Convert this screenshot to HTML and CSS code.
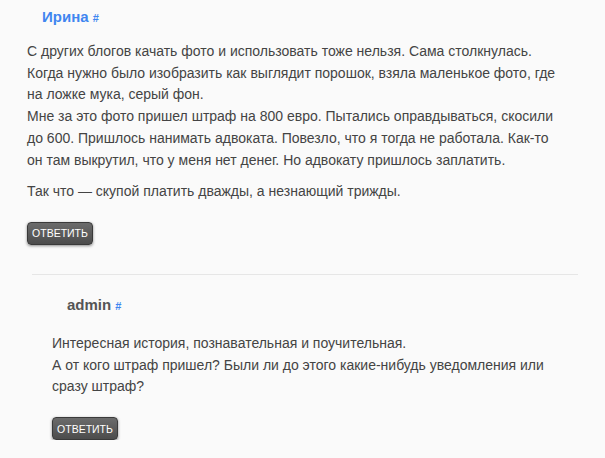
FILE: index.html
```html
<!DOCTYPE html>
<html lang="ru">
<head>
  <meta charset="UTF-8" />
  <title>Комментарии</title>
  <link rel="stylesheet" href="styles.css">
</head>
<body>
  <div class="comments">
    <div class="comment">
      <div class="author author-guest">Ирина <a href="#" class="anchor">#</a></div>
      <div class="text">
        <p>С других блогов качать фото и использовать тоже нельзя. Сама столкнулась. Когда нужно было изобразить как выглядит порошок, взяла маленькое фото, где на ложке мука, серый фон.<br>Мне за это фото пришел штраф на 800 евро. Пытались оправдываться, скосили до 600. Пришлось нанимать адвоката. Повезло, что я тогда не работала. Как-то он там выкрутил, что у меня нет денег. Но адвокату пришлось заплатить.</p>
        <p>Так что — скупой платить дважды, а незнающий трижды.</p>
      </div>
      <button class="reply-btn">ОТВЕТИТЬ</button>

      <div class="comment comment-child">
        <div class="author">admin <a href="#" class="anchor">#</a></div>
        <div class="text">
          <p>Интересная история, познавательная и поучительная.<br>А от кого штраф пришел? Были ли до этого какие-нибудь уведомления или сразу штраф?</p>
        </div>
        <button class="reply-btn">ОТВЕТИТЬ</button>
      </div>
    </div>
  </div>
</body>
</html>
```

FILE: styles.css
```css
* {
  box-sizing: border-box;
}

body {
  margin: 0;
  background: #fafafa;
  font-family: "Liberation Sans", Arial, sans-serif;
  color: #444;
}

.comments {
  width: 578px;
}

.comment {
  padding: 7px 0 0 27px;
}

.author {
  margin-left: 15px;
  font-size: 15px;
  line-height: 20px;
  font-weight: bold;
  color: #555;
}

.author-guest {
  color: #3f86f0;
}

.anchor {
  font-size: 11px;
  color: #3f86f0;
  text-decoration: none;
}

.text {
  max-width: 538px;
  margin-top: 13px;
  font-size: 14px;
  line-height: 21.7px;
}

.text p {
  margin: 0 0 10px;
}

.reply-btn {
  display: block;
  margin-top: 19px;
  width: 66px;
  height: 23px;
  padding: 0;
  font-family: "Liberation Sans", Arial, sans-serif;
  font-size: 10.5px;
  color: #fff;
  background: linear-gradient(#6b6b6b, #4c4c4c);
  border: 1px solid #3a3a3a;
  border-radius: 4px;
  box-shadow: 0 1px 3px rgba(0, 0, 0, 0.45);
  cursor: pointer;
}

.comment-child {
  margin: 29px 0 0 5px;
  padding: 20px 0 0 20px;
  border-top: 1px solid #e6e6e6;
}

.comment-child .text {
  max-width: 513px;
  margin-top: 17px;
}
```
